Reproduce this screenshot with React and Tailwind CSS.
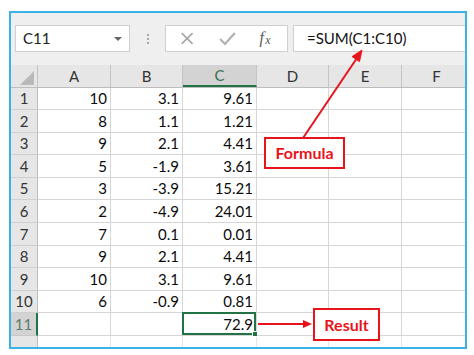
import React from "react";

const cols = [
  { key: "A", w: "w-[73px]" },
  { key: "B", w: "w-[72px]" },
  { key: "C", w: "w-[74px]" },
  { key: "D", w: "w-[72px]" },
  { key: "E", w: "w-[73px]" },
  { key: "F", w: "w-[70px]" },
];

const data = [
  ["10", "3.1", "9.61"],
  ["8", "1.1", "1.21"],
  ["9", "2.1", "4.41"],
  ["5", "-1.9", "3.61"],
  ["3", "-3.9", "15.21"],
  ["2", "-4.9", "24.01"],
  ["7", "0.1", "0.01"],
  ["9", "2.1", "4.41"],
  ["10", "3.1", "9.61"],
  ["6", "-0.9", "0.81"],
  ["", "", "72.9"],
];

const heights = [
  "h-[22px]", "h-[23px]", "h-[22px]", "h-[23px]", "h-[22px]", "h-[23px]",
  "h-[23px]", "h-[22px]", "h-[23px]", "h-[22px]", "h-[23px]",
];

const font = { fontFamily: "Lato, 'Open Sans', sans-serif" };

export default function App() {
  return (
    <div className="relative w-[474px] h-[355px] bg-white overflow-hidden" style={font}>
      <div className="ml-[9px] mt-[11px] w-[458px] h-[338px] border-2 border-[#3cb2e2] bg-[#efefef] overflow-hidden flex flex-col">
        {/* Formula bar */}
        <div className="flex items-center h-[52px] pl-[4px] pb-[1px] shrink-0">
          <div className="w-[115px] h-[27px] bg-white border border-[#cfcfcf] flex items-center justify-between pl-[7px] pr-[7px]">
            <span className="text-[15px] text-[#222]">C11</span>
            <span className="w-0 h-0 border-l-[4px] border-r-[4px] border-t-[4px] border-l-transparent border-r-transparent border-t-[#666]" />
          </div>
          <div className="w-[35px] flex flex-col items-center gap-[2px]">
            <span className="w-[2px] h-[2px] bg-[#a8a8a8]" />
            <span className="w-[2px] h-[2px] bg-[#a8a8a8]" />
            <span className="w-[2px] h-[2px] bg-[#a8a8a8]" />
          </div>
          <div className="w-[123px] h-[27px] bg-white border border-[#cfcfcf] flex items-center">
            <svg width="123" height="27" viewBox="0 0 123 27">
              <path d="M16 8 L27 19 M27 8 L16 19" stroke="#a6a6a6" strokeWidth="1.6" fill="none" />
              <path d="M55 14 L60 19 L70 8" stroke="#b0b0b0" strokeWidth="2.2" fill="none" />
              <text x="95" y="18" fontFamily="'Liberation Serif', serif" fontStyle="italic" fontSize="16" fill="#555">f</text>
              <text x="101" y="19" fontFamily="'Liberation Serif', serif" fontStyle="italic" fontSize="12" fill="#555">x</text>
            </svg>
          </div>
          <div className="ml-[5px] flex-1 h-[27px] bg-white border border-[#cfcfcf] border-r-0 flex items-center pl-[13px]">
            <span className="text-[15px] text-[#111]">=SUM(C1:C10)</span>
          </div>
        </div>

        {/* Header row */}
        <div className="flex h-[23px] shrink-0 bg-[#e6e6e6] border-b border-[#bdbdbd]">
          <div className="w-[27px] shrink-0 relative border-r border-[#c4c4c4]">
            <svg className="absolute right-[3px] bottom-[2px]" width="14" height="14" viewBox="0 0 14 14">
              <path d="M14 0 L14 14 L0 14 Z" fill="#b9b9b9" />
            </svg>
          </div>
          {cols.map((c) =>
            c.key === "C" ? (
              <div key={c.key} className={`${c.w} shrink-0 flex items-center justify-center bg-[#d3d3d3] border-r border-[#c4c4c4] border-b-2 border-b-[#217346] text-[15px] text-[#3d6e52]`}>
                {c.key}
              </div>
            ) : (
              <div key={c.key} className={`${c.w} shrink-0 flex items-center justify-center border-r border-[#c4c4c4] text-[15px] text-[#333]`}>
                {c.key}
              </div>
            )
          )}
        </div>

        {/* Data rows */}
        {data.map((r, i) => {
          const sel = i === 10;
          return (
            <div key={i} className={`flex ${heights[i]} shrink-0`}>
              <div
                className={
                  sel
                    ? "w-[27px] shrink-0 flex items-center justify-center bg-[#d3d3d3] border-r-2 border-[#217346] border-b border-b-[#c8c8c8] text-[15px] text-[#5f7a6a]"
                    : "w-[27px] shrink-0 flex items-center justify-center bg-[#e6e6e6] border-r border-[#bdbdbd] border-b border-b-[#d0d0d0] text-[15px] text-[#333]"
                }
              >
                {i + 1}
              </div>
              {cols.map((c, j) => (
                <div
                  key={c.key}
                  className={`${c.w} shrink-0 relative flex items-center justify-end pr-[3px] bg-white border-r border-b border-[#d6d6d6] text-[15px] text-[#0a0a0a]`}
                >
                  {j < 3 ? r[j] : ""}
                  {sel && j === 2 && (
                    <div className="absolute -left-[1px] -top-[1px] right-0 bottom-0 border-2 border-[#217346]">
                      <div className="absolute -right-[4px] -bottom-[4px] w-[6px] h-[6px] bg-[#217346] border border-white" />
                    </div>
                  )}
                </div>
              ))}
            </div>
          );
        })}
        {/* partial row 12 */}
        <div className="flex flex-1">
          <div className="w-[27px] shrink-0 bg-[#e6e6e6] border-r border-[#bdbdbd]" />
          {cols.map((c) => (
            <div key={c.key} className={`${c.w} shrink-0 bg-white border-r border-[#e6e6e6]`} />
          ))}
        </div>
      </div>

      {/* Annotation arrows */}
      <svg className="absolute left-0 top-0" width="474" height="355" viewBox="0 0 474 355">
        <line x1="303" y1="138" x2="357" y2="58" stroke="#e8141b" strokeWidth="2" />
        <path d="M362 50 L359.5 61.6 L352.1 56.6 Z" fill="#e8141b" stroke="#e8141b" strokeWidth="1" />
        <line x1="258" y1="324" x2="304" y2="324" stroke="#e8141b" strokeWidth="2" />
        <path d="M312 324 L303 320 L303 328 Z" fill="#e8141b" />
      </svg>

      <div className="absolute left-[264px] top-[137px] w-[81px] h-[32px] bg-white border-2 border-[#e8141b] flex items-center justify-center text-[16px] font-bold text-[#e8141b]">
        Formula
      </div>
      <div className="absolute left-[313px] top-[308px] w-[67px] h-[33px] bg-white border-2 border-[#e8141b] flex items-center justify-center text-[16px] font-bold text-[#e8141b]">
        Result
      </div>
    </div>
  );
}
